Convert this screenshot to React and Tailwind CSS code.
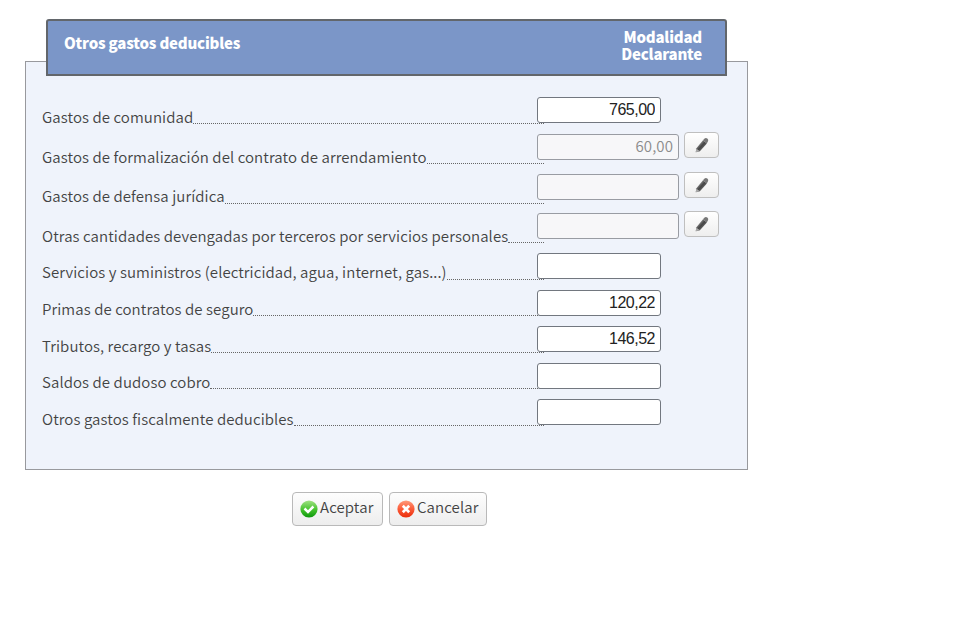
import React from 'react';
import clsx from 'clsx';

const rows = [
  { label: 'Gastos de comunidad', value: '765,00', height: 'h-[37px]', offset: 'pb-px' },
  { label: 'Gastos de formalización del contrato de arrendamiento', value: '60,00', locked: true, height: 'h-[40px]', offset: 'pb-[4px]' },
  { label: 'Gastos de defensa jurídica', value: '', locked: true, height: 'h-[40px]', offset: 'pb-[4px]', raised: true },
  { label: 'Otras cantidades devengadas por terceros por servicios personales', value: '', locked: true, height: 'h-[39px]', offset: 'pb-[4px]' },
  { label: 'Servicios y suministros (electricidad, agua, internet, gas...)', value: '', height: 'h-[37px]', offset: 'pb-px', raised: true },
  { label: 'Primas de contratos de seguro', value: '120,22', height: 'h-[36px]', offset: 'pb-0' },
  { label: 'Tributos, recargo y tasas', value: '146,52', height: 'h-[37px]', offset: 'pb-px' },
  { label: 'Saldos de dudoso cobro', value: '', height: 'h-[36px]', offset: 'pb-0' },
  { label: 'Otros gastos fiscalmente deducibles', value: '', height: 'h-[37px]', offset: 'pb-px' },
];

export default function App() {
  return (
    <div className="h-[632px] w-[960px] overflow-hidden bg-white pl-[25px] pt-[61px] font-['Noto_Sans_CJK_SC',sans-serif] text-[#434343]">
      <section className="h-[409px] w-[723px] border border-[#98999d] bg-[#eff3fb]">
        <header className="-mt-[43px] mb-px ml-5 flex h-[57px] w-[681px] justify-between rounded-t-[3px] border-2 border-[#62666b] bg-[#7b96c8] pl-[16px] pr-[23px] text-[15px] font-black tracking-[-0.2px] text-white">
          <h1 className="pt-[13px] leading-[18px]">Otros gastos deducibles</h1>
          <p className="pt-[7px] text-right leading-[17px]">
            Modalidad
            <br />
            Declarante
          </p>
        </header>
        <div className="pl-4 pt-[10px]">
          {rows.map(row => (
            <Row key={row.label} {...row} />
          ))}
        </div>
      </section>

      <div className="mt-[22px] flex gap-[6px] pl-[267px]">
        <ActionButton label="Aceptar" width="w-[91px]">
          <AcceptIcon />
        </ActionButton>
        <ActionButton label="Cancelar" width="w-[98px]">
          <CancelIcon />
        </ActionButton>
      </div>
    </div>
  );
}

function Row({ label, value, locked, height, offset, raised }) {
  return (
    <div className={clsx('flex items-end', height)}>
      <div className="flex w-[502px] items-end">
        <span className={clsx('shrink-0 whitespace-nowrap text-[15px] font-[350] leading-[15px] tracking-[0.08px]', raised && 'pb-px')}>{label}</span>
        <span className="flex-1 border-b border-dotted border-[#666]" />
      </div>
      <div className={clsx('-ml-[7px] flex', offset)}>
        <input
          readOnly
          aria-label={label}
          defaultValue={value}
          className={clsx(
            'h-[26px] rounded-[3px] border px-[5px] text-right outline-none',
            locked
              ? 'w-[142px] border-[#999ca3] bg-[#f7f7f9] pb-[3px] text-[15px] font-[350] tracking-[0.1px] text-[#8b8b8b]'
              : "w-[124px] border-[#72777f] bg-white font-['Liberation_Sans',sans-serif] text-[16px] tracking-[-0.5px] text-[#222]"
          )}
        />
        {locked && (
          <button
            aria-label="Editar"
            className="-mt-[2px] ml-[5px] flex h-[26px] w-[35px] items-center justify-center rounded-[4px] border border-[#bfbfbf] bg-linear-to-b from-white to-[#eeeeee]"
          >
            <PencilIcon />
          </button>
        )}
      </div>
    </div>
  );
}

function ActionButton({ label, width, children }) {
  return (
    <button className={clsx('flex h-[34px] items-center rounded-[4px] border border-[#b9b9b9] bg-linear-to-b from-[#fdfdfd] to-[#ededed] pl-[7px]', width)}>
      {children}
      <span className="mb-[4px] ml-[2px] whitespace-nowrap text-[15px] font-[350] leading-[20px] tracking-[0.1px]">{label}</span>
    </button>
  );
}

function PencilIcon() {
  return (
    <svg width="14" height="16" viewBox="0 0 14 16">
      <defs>
        <linearGradient id="pencil" x1="0" y1="0" x2="1" y2="1">
          <stop offset="0.2" stopColor="#aaa" />
          <stop offset="0.5" stopColor="#444" />
          <stop offset="0.85" stopColor="#888" />
        </linearGradient>
      </defs>
      <path d="M.8 15.2 L1.2 11.6 L8 3.2 L11.9 6.4 L4.9 14.2 Z" fill="url(#pencil)" />
      <path d="M7.9 3.3 L9.6 1.4 Q11 .4 12.6 1.8 Q13.8 2.9 12.9 4.4 L11.8 6.4 Z" fill="#777" />
      <path d="M.8 15.2 L1.2 11.6 L4.9 14.2 Z" fill="#aaa" />
    </svg>
  );
}

function AcceptIcon() {
  return (
    <svg width="18" height="18" viewBox="0 0 18 18">
      <defs>
        <linearGradient id="accept" x1="0" y1="0" x2="0" y2="1">
          <stop offset="0" stopColor="#a2e285" />
          <stop offset="0.55" stopColor="#43c22c" />
          <stop offset="1" stopColor="#0c960b" />
        </linearGradient>
      </defs>
      <circle cx="9" cy="9" r="8.6" fill="url(#accept)" />
      <path d="M4.5 8.5 L8 12 L13.4 6.5" fill="none" stroke="#fff" strokeWidth="2.5" />
    </svg>
  );
}

function CancelIcon() {
  return (
    <svg width="18" height="18" viewBox="0 0 18 18">
      <defs>
        <linearGradient id="cancel" x1="0" y1="0" x2="0" y2="1">
          <stop offset="0" stopColor="#ff9b7c" />
          <stop offset="0.5" stopColor="#fc5b38" />
          <stop offset="1" stopColor="#e92e0b" />
        </linearGradient>
      </defs>
      <circle cx="9" cy="9" r="8.6" fill="url(#cancel)" />
      <path d="M5.8 5.8 L12.2 12.2 M12.2 5.8 L5.8 12.2" fill="none" stroke="#fff" strokeWidth="2.7" />
    </svg>
  );
}
